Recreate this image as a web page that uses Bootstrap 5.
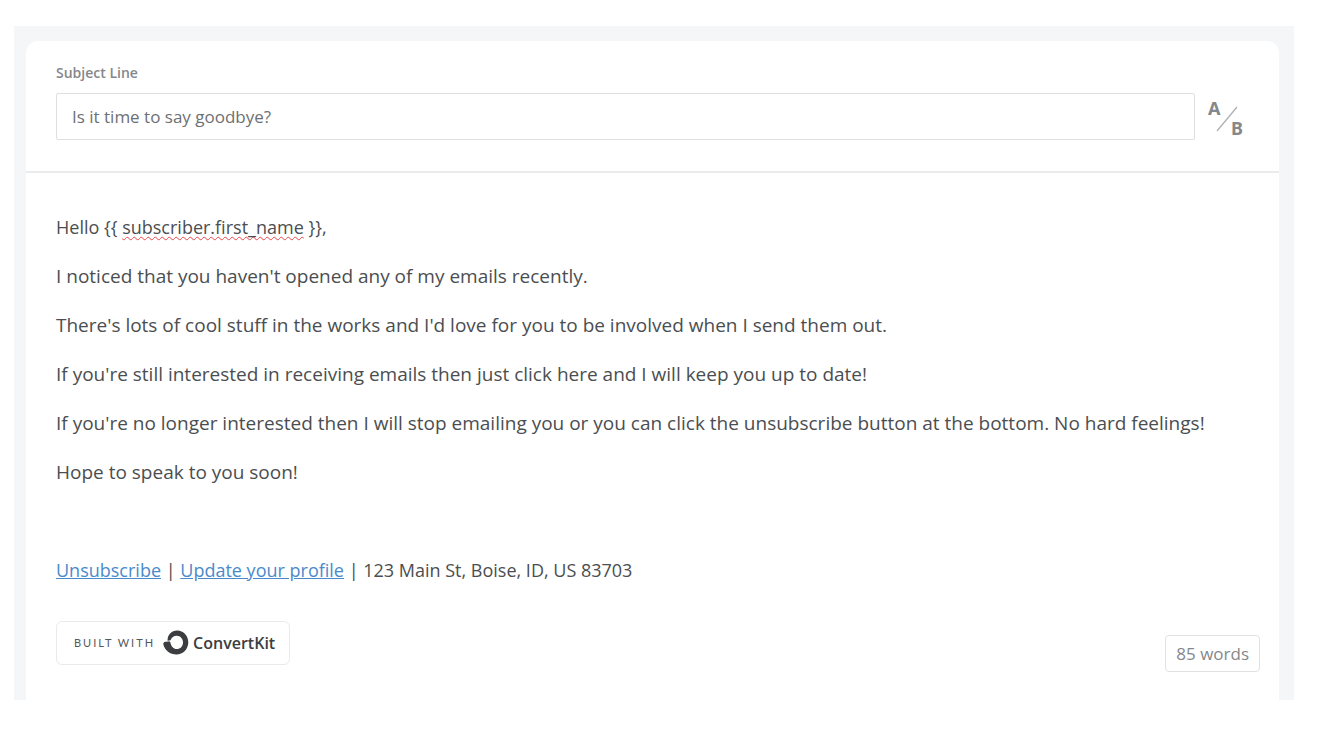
<!DOCTYPE html>
<html lang="en">
<head>
<meta charset="utf-8">
<meta name="viewport" content="width=device-width, initial-scale=1">
<title>Broadcast editor</title>
<link href="https://cdn.jsdelivr.net/npm/bootstrap@5.3.0/dist/css/bootstrap.min.css" rel="stylesheet">
<style>
  body { font-family: "Open Sans", "Noto Sans", sans-serif; color: #4b4e51; padding: 26px 26px 35px 14px; background: #fff; }
  .editor-shell { background: #f4f6f8; padding: 15px 15px 0 12px; }
  .editor-card { background: #fff; border-radius: 12px 12px 0 0; }
  .subject-area { padding: 22px 30px 31px; border-bottom: 2px solid #eaebec; }
  .subject-label { font-size: 14px; line-height: 20px; font-weight: 600; color: #85888b; margin-bottom: 10px; }
  .subject-input { height: 47px; padding: 0 15px; font-size: 17px; color: #6d7073; border: 1px solid #dddfe1; border-radius: 2px; }
  .ab-button { width: 42px; height: 44px; }
  .message { padding: 40px 30px 28px; font-size: 19px; line-height: 29px; }
  .message p { margin-bottom: 20px; }
  .message .merge-line { font-size: 18px; }
  .message a { color: #4a8acb; }
  .misspelt { text-decoration: underline wavy #e8474c 1px; text-decoration-skip-ink: none; text-underline-offset: 2px; }
  .built-with { height: 44px; padding: 0 14px 0 17px; border: 1px solid #e8eaec; border-radius: 6px; line-height: 20px; }
  .built-with .tagline { font: 400 11px/20px Lato, sans-serif; letter-spacing: 2px; color: #55585b; }
  .built-with .brand { font: 600 16px/20px "Open Sans", sans-serif; color: #3b3d40; }
  .message a.built-with { color: #3b3d40; }
  .word-count { padding: 5px 10px; border: 1px solid #dfe1e3; border-radius: 4px; font-size: 17px; line-height: 25px; color: #85888b; margin: 14px -11px 0 0; }
</style>
</head>
<body>
<main class="editor-shell">
  <section class="editor-card">
    <div class="subject-area">
      <label for="subject" class="subject-label d-block">Subject Line</label>
      <div class="d-flex align-items-center">
        <input id="subject" type="text" class="form-control subject-input flex-fill shadow-none" value="Is it time to say goodbye?">
        <button type="button" class="btn p-0 border-0 ab-button ms-2 me-1 flex-shrink-0" aria-label="A/B test the subject">
          <svg class="d-block" width="42" height="44" viewBox="0 0 42 44">
            <path d="M14 36 L34 12" stroke="#aeb0b2" stroke-width="1.3" fill="none"/>
            <g fill="#85888a" font-family="Noto Sans, sans-serif" font-weight="700" font-size="18">
              <text x="5" y="20">A</text>
              <text x="28" y="40">B</text>
            </g>
          </svg>
        </button>
      </div>
    </div>
    <div class="message">
      <p class="merge-line">Hello {{ <span class="misspelt">subscriber.first_name</span> }},</p>
      <p>I noticed that you haven't opened any of my emails recently.</p>
      <p>There's lots of cool stuff in the works and I'd love for you to be involved when I send them out.</p>
      <p>If you're still interested in receiving emails then just click here and I will keep you up to date!</p>
      <p>If you're no longer interested then I will stop emailing you or you can click the unsubscribe button at the bottom. No hard feelings!</p>
      <p>Hope to speak to you soon!</p>
      <p>&nbsp;</p>
      <p class="merge-line"><a href="#">Unsubscribe</a> | <a href="#">Update your profile</a> | 123 Main St, Boise, ID, US 83703</p>
      <div class="d-flex justify-content-between align-items-start pt-3">
        <a href="#" class="built-with d-inline-flex align-items-center text-decoration-none">
          <span class="tagline">BUILT WITH</span>
          <svg class="ms-2 me-1" width="26" height="26" viewBox="0 0 26 26" aria-hidden="true">
            <path d="M4.600 10.800 C4.200 4.800 8.500 0.500 14.200 0.500 C20.500 0.500 25.300 5.800 25.300 12.300 C25.300 19.200 20 24.500 13.500 24.500 C7 24.500 2 20.500 0.400 14.800 C0 13.200 0.900 11.900 2.500 11.800 L5.600 11.400 C6.700 11.200 7.300 12 7.500 13 C8.300 16.600 10.500 19 13.700 19 C17.400 19 20 16 20 12.400 C20 8.600 17.300 5.700 13.700 5.700 C10.700 5.700 8.600 7.200 7.600 10.300 Z" fill="#3b3d40"/>
          </svg>
          <span class="brand">ConvertKit</span>
        </a>
        <span class="word-count">85 words</span>
      </div>
    </div>
  </section>
</main>
<script src="https://cdn.jsdelivr.net/npm/bootstrap@5.3.0/dist/js/bootstrap.bundle.min.js"></script>
</body>
</html>
